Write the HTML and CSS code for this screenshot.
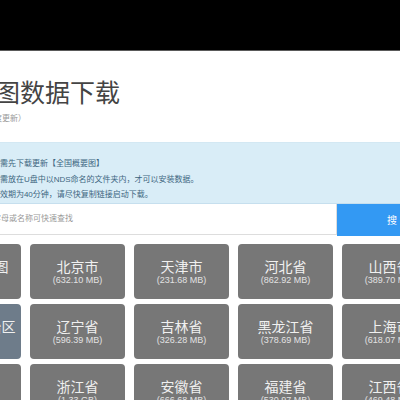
FILE: index.html
```html
<!DOCTYPE html>
<html lang="zh-CN">
<head>
<meta charset="utf-8">
<title>地图数据下载</title>
<link rel="stylesheet" href="styles.css">
</head>
<body>
<div class="topbar"></div>
<div class="page">
  <div class="header">
    <h1 class="title">地图数据下载</h1>
    <p class="subtitle">（每季度更新）</p>
  </div>
  <div class="alert">
    <p class="alert-line">1. 安装前需先下载更新【全国概要图】</p>
    <p class="alert-line">2. 下载后需放在U盘中以NDS命名的文件夹内，才可以安装数据。</p>
    <p class="alert-line">3. 链接有效期为40分钟，请尽快复制链接启动下载。</p>
  </div>
  <div class="search">
    <input class="search-input" type="text" placeholder="输入省份拼音首字母或名称可快速查找">
    <button class="search-btn" type="button">搜 索</button>
  </div>
  <div class="grid">
    <div class="tile"><div class="tile-name">全国概要图</div><div class="tile-size">(35.20 MB)</div></div>
    <div class="tile"><div class="tile-name">北京市</div><div class="tile-size">(632.10 MB)</div></div>
    <div class="tile"><div class="tile-name">天津市</div><div class="tile-size">(231.68 MB)</div></div>
    <div class="tile"><div class="tile-name">河北省</div><div class="tile-size">(862.92 MB)</div></div>
    <div class="tile"><div class="tile-name">山西省</div><div class="tile-size">(389.70 MB)</div></div>

    <div class="tile tile-active"><div class="tile-name">内蒙古自治区</div><div class="tile-size">(712.45 MB)</div></div>
    <div class="tile"><div class="tile-name">辽宁省</div><div class="tile-size">(596.39 MB)</div></div>
    <div class="tile"><div class="tile-name">吉林省</div><div class="tile-size">(326.28 MB)</div></div>
    <div class="tile"><div class="tile-name">黑龙江省</div><div class="tile-size">(378.69 MB)</div></div>
    <div class="tile"><div class="tile-name">上海市</div><div class="tile-size">(618.07 MB)</div></div>

    <div class="tile"><div class="tile-name">江苏省</div><div class="tile-size">(1.52 GB)</div></div>
    <div class="tile"><div class="tile-name">浙江省</div><div class="tile-size">(1.33 GB)</div></div>
    <div class="tile"><div class="tile-name">安徽省</div><div class="tile-size">(666.68 MB)</div></div>
    <div class="tile"><div class="tile-name">福建省</div><div class="tile-size">(530.97 MB)</div></div>
    <div class="tile"><div class="tile-name">江西省</div><div class="tile-size">(469.48 MB)</div></div>
  </div>
</div>
</body>
</html>
```

FILE: styles.css
```css
html, body {
  margin: 0;
  padding: 0;
  overflow: hidden;
  background: #ffffff;
  width: 400px;
  height: 400px;
}

body {
  font-family: "Liberation Sans", "Noto Sans CJK SC", sans-serif;
  color: #333;
}

.topbar {
  height: 50px;
  background: #000;
  border-bottom: 1px solid #5a5a5a;
}

.page {
  width: 534px;
  margin-left: -74px;
}

.header {
  padding-left: 44px;
}

.title {
  margin: 27px 0 0;
  font-size: 25px;
  line-height: 30px;
  font-weight: normal;
  color: #444;
  white-space: nowrap;
}

.subtitle {
  margin: 5px 0 0;
  font-size: 8px;
  line-height: 12px;
  color: #999;
  white-space: nowrap;
}

.alert {
  margin-top: 17px;
  background: #d9edf7;
  border-top: 1px solid #d3e8f3;
  border-bottom: 1px solid #c6dfee;
  padding: 13px 0 0 41px;
  color: #3d6680;
}

.alert-line {
  margin: 0;
  font-size: 8px;
  line-height: 15.5px;
  white-space: nowrap;
}

.search {
  display: flex;
  height: 31px;
}

.search-input {
  flex: 1;
  min-width: 0;
  box-sizing: border-box;
  height: 31px;
  margin: 0;
  border: 1px solid #ddd;
  border-top: none;
  padding: 0 0 0 10px;
  font-family: inherit;
  font-size: 8px;
  color: #555;
  outline: none;
}

.search-input::placeholder {
  color: #999;
}

.search-btn {
  width: 123px;
  height: 32px;
  margin: 0;
  border: none;
  background: #3399f3;
  color: #fff;
  font-family: inherit;
  font-size: 10px;
  padding: 0;
}

.grid {
  margin-top: 9px;
  display: grid;
  grid-template-columns: repeat(5, 95px);
  column-gap: 9px;
  row-gap: 5px;
}

.tile {
  height: 55px;
  box-sizing: border-box;
  padding-top: 14px;
  background: #777;
  border-radius: 4px;
  text-align: center;
  white-space: nowrap;
  overflow: hidden;
}

.tile-active {
  background: #6e7c8a;
}

.tile-name {
  font-size: 14px;
  line-height: 18px;
  color: #f0f0f0;
}

.tile-size {
  font-size: 9px;
  line-height: 9px;
  color: #e2e2e2;
}
```
